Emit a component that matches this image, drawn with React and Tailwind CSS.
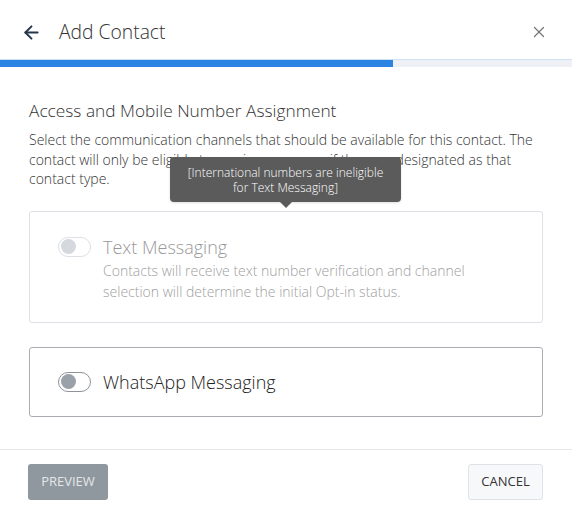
import { ArrowLeft, X } from "lucide-react";

const Toggle = ({ disabled }) => (
  <div
    className={
      "w-[33px] h-[20px] rounded-full border flex items-center px-[2px] shrink-0 " +
      (disabled ? "border-[#dcdfe3] bg-white" : "border-[#8d939a] bg-white")
    }
  >
    <div
      className={
        "w-[15px] h-[15px] rounded-full " +
        (disabled ? "bg-[#d5d8dd]" : "bg-[#9ba1a8]")
      }
    />
  </div>
);

export default function App() {
  return (
    <div className="w-[572px] h-[512px] bg-white font-['Open_Sans',sans-serif] overflow-hidden">
      {/* header */}
      <div className="h-[59px] flex items-center pt-[5px] pl-[21px] pr-[24px]">
        <ArrowLeft className="size-[21px] text-[#23364a]" strokeWidth={2.2} />
        <h1 className="ml-[17px] text-[19.3px] font-light text-[#333] leading-none">Add Contact</h1>
        <X className="ml-auto size-[18px] text-[#777]" strokeWidth={1.7} />
      </div>

      {/* progress */}
      <div className="h-[8px] bg-[#eef0f5] border-t border-[#cfe1f5]">
        <div className="h-full w-[393px] bg-[#2b84e2]" />
      </div>

      {/* body */}
      <div className="relative px-[29px] pt-[32px] pb-[32px] border-b border-[#e6e8ec]">
        <h2 className="text-[17.3px] font-light leading-[24px] text-[#333]">
          Access and Mobile Number Assignment
        </h2>
        <p className="mt-[7px] text-[14px] font-light leading-[19.5px] text-[#333] pr-[4px]">
          Select the communication channels that should be available for this contact. The
          contact will only be eligible to receive messages if they are designated as that
          contact type.
        </p>

        <div className="mt-[22px] border border-[#dde1e6] rounded-[3px] pl-[28px] pr-[20px] pt-[23px] pb-[20px]">
          <div className="flex items-center gap-[12px]">
            <Toggle disabled />
            <span className="text-[18px] font-light leading-[24px] text-[#999]">Text Messaging</span>
          </div>
          <p className="ml-[45px] mt-[1px] text-[14px] font-light leading-[21px] text-[#a0a0a0]">
            Contacts will receive text number verification and channel
            <br />
            selection will determine the initial Opt-in status.
          </p>
        </div>

        <div className="mt-[24px] border border-[#a9adb2] rounded-[3px] h-[70px] pl-[28px] flex items-center">
          <div className="flex items-center gap-[12px]">
            <Toggle />
            <span className="text-[18px] font-light leading-[24px] text-[#222]">WhatsApp Messaging</span>
          </div>
        </div>

        {/* tooltip */}
        <div className="absolute left-[170px] top-[90px] w-[231px] h-[45px] bg-[#5b5b5b] rounded-[4px] flex items-center justify-center text-center text-[12px] font-light leading-[15px] text-white shadow-sm">
          [International numbers are ineligible
          <br />
          for Text Messaging]
          <div className="absolute left-1/2 -translate-x-1/2 top-full w-0 h-0 border-l-[6px] border-r-[6px] border-t-[6px] border-l-transparent border-r-transparent border-t-[#5b5b5b]" />
        </div>
      </div>

      {/* footer */}
      <div className="flex items-center justify-between pl-[28px] pr-[29px] pt-[14px]">
        <button className="h-[36px] w-[80px] rounded-[3px] bg-[#8f989e] text-[13px] text-[#e4e7e9]">
          PREVIEW
        </button>
        <button className="h-[36px] w-[75px] rounded-[3px] bg-[#f7f8fa] border border-[#dfe2e6] text-[13px] text-[#333]">
          CANCEL
        </button>
      </div>
    </div>
  );
}
